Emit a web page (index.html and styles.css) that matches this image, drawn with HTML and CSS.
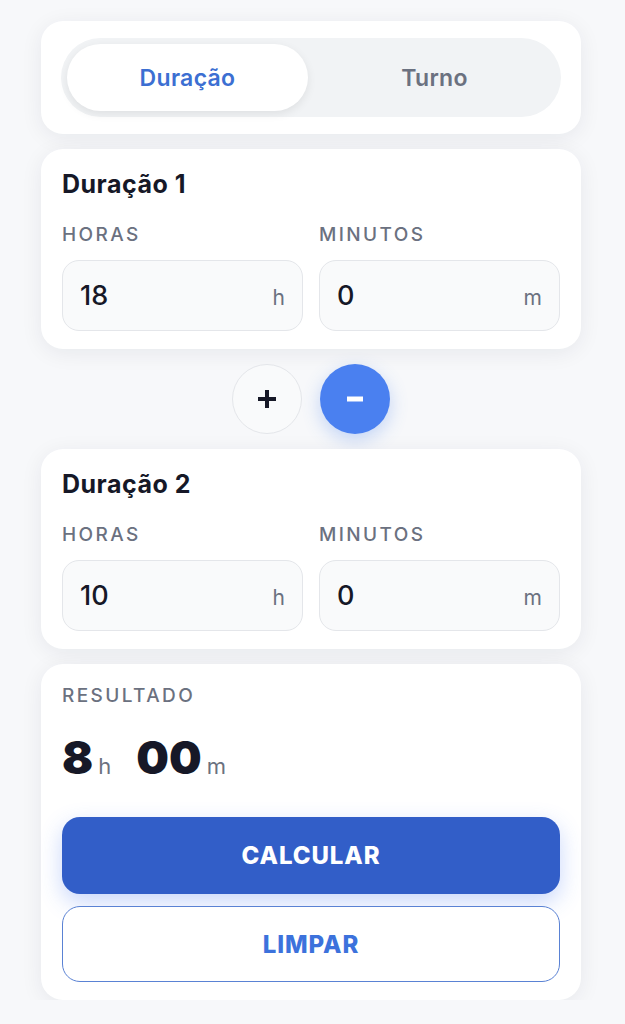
FILE: index.html
```html
<!DOCTYPE html>
<html lang="pt">
<head>
<meta charset="utf-8">
<title>Calculadora de Horas</title>
<link rel="stylesheet" href="styles.css">
</head>
<body>
<main class="page">
  <section class="card tabs-card">
    <div class="tabs">
      <button class="tab active">Duração</button>
      <button class="tab">Turno</button>
    </div>
  </section>

  <section class="card dur-card">
    <h2 class="dur-title">Duração 1</h2>
    <div class="fields">
      <div class="field">
        <div class="label">HORAS</div>
        <div class="input"><span class="val">18</span><span class="unit">h</span></div>
      </div>
      <div class="field">
        <div class="label">MINUTOS</div>
        <div class="input"><span class="val">0</span><span class="unit">m</span></div>
      </div>
    </div>
  </section>

  <div class="ops">
    <button class="op plus" aria-label="Somar">
      <svg width="20" height="20" viewBox="0 0 20 20"><path d="M10 3v14M3 10h14" stroke="#161827" stroke-width="4" stroke-linecap="square"/></svg>
    </button>
    <button class="op minus" aria-label="Subtrair">
      <svg width="20" height="20" viewBox="0 0 20 20"><path d="M2 10h16" stroke="#fff" stroke-width="5"/></svg>
    </button>
  </div>

  <section class="card dur-card">
    <h2 class="dur-title">Duração 2</h2>
    <div class="fields">
      <div class="field">
        <div class="label">HORAS</div>
        <div class="input"><span class="val">10</span><span class="unit">h</span></div>
      </div>
      <div class="field">
        <div class="label">MINUTOS</div>
        <div class="input"><span class="val">0</span><span class="unit">m</span></div>
      </div>
    </div>
  </section>

  <section class="card result-card">
    <div class="label">RESULTADO</div>
    <div class="result">
      <span class="big">8</span><span class="sm">h</span>
      <span class="big gap">00</span><span class="sm">m</span>
    </div>
    <button class="btn primary">CALCULAR</button>
    <button class="btn outline">LIMPAR</button>
  </section>
</main>
</body>
</html>
```

FILE: styles.css
```css
* { box-sizing: border-box; }
html, body { margin: 0; padding: 0; }
body {
  background: #f7f8fa;
  font-family: Inter, "Noto Sans", "Liberation Sans", sans-serif;
  color: #161827;
}
button { font-family: inherit; border: none; cursor: pointer; }
.page {
  width: 540px;
  margin-left: 41px;
  padding-top: 21px;
  display: flex;
  flex-direction: column;
  gap: 15px;
}
.card {
  background: #fff;
  border-radius: 22px;
  box-shadow: 0 4px 22px rgba(20, 30, 60, 0.07);
}
.tabs-card { padding: 17px 20px; }
.tabs {
  background: #f1f3f5;
  border-radius: 40px;
  height: 79px;
  padding: 6px;
  display: flex;
  gap: 6px;
}
.tab {
  flex: 1;
  border-radius: 34px;
  background: transparent;
  font-size: 23px;
  font-weight: 600;
  letter-spacing: 0.3px;
  color: #6b7180;
}
.tab.active {
  background: #fff;
  color: #3c6fd2;
  box-shadow: 0 3px 10px rgba(0, 0, 0, 0.08);
}
.dur-card { padding: 20px 21px 18px; }
.dur-title {
  margin: 0;
  font-size: 25px;
  line-height: 30px;
  font-weight: 700;
  letter-spacing: 0.5px;
  color: #161827;
}
.fields {
  display: grid;
  grid-template-columns: 1fr 1fr;
  gap: 16px;
  margin-top: 25px;
}
.label {
  font-size: 19px;
  line-height: 22px;
  letter-spacing: 2.4px;
  color: #6b7180;
  font-weight: 500;
}
.input {
  margin-top: 14px;
  height: 71px;
  border-radius: 17px;
  background: #f9fafb;
  border: 1.5px solid #e4e6ea;
  display: flex;
  align-items: center;
  justify-content: space-between;
  padding: 0 17px 0 17px;
}
.val { font-size: 27px; font-weight: 500; color: #161827; }
.unit { font-size: 21px; color: #6b7180; padding-top: 4px; }
.ops {
  display: flex;
  justify-content: center;
  gap: 18px;
}
.op {
  width: 70px;
  height: 70px;
  border-radius: 50%;
  display: flex;
  align-items: center;
  justify-content: center;
  padding: 0;
}
.op.plus {
  background: #f9fafb;
  border: 1.5px solid #e4e6ea;
}
.op.minus {
  background: #4a80f0;
  box-shadow: 0 6px 18px rgba(74, 128, 240, 0.3);
}
.result-card { padding: 20px 21px 18px; }
.result-card .label { line-height: 24px; }
.result {
  margin-top: 24px;
  height: 50px;
  display: flex;
  align-items: baseline;
}
.big { font-size: 46px; font-weight: 900; color: #161827; line-height: 50px; }
.sm { font-size: 22px; color: #6b7180; margin-left: 5px; }
.big.gap { margin-left: 25px; }
.btn {
  display: block;
  width: 100%;
  font-size: 24px;
  font-weight: 800;
  letter-spacing: 0.9px;
  border-radius: 18px;
}
.btn.primary {
  margin-top: 35px;
  height: 77px;
  background: #325ec8;
  color: #fff;
  box-shadow: 0 8px 22px rgba(60, 110, 240, 0.28);
}
.btn.outline {
  margin-top: 12px;
  height: 76px;
  background: #fff;
  color: #3c72dc;
  border: 1.5px solid #5a82d4;
}
```
